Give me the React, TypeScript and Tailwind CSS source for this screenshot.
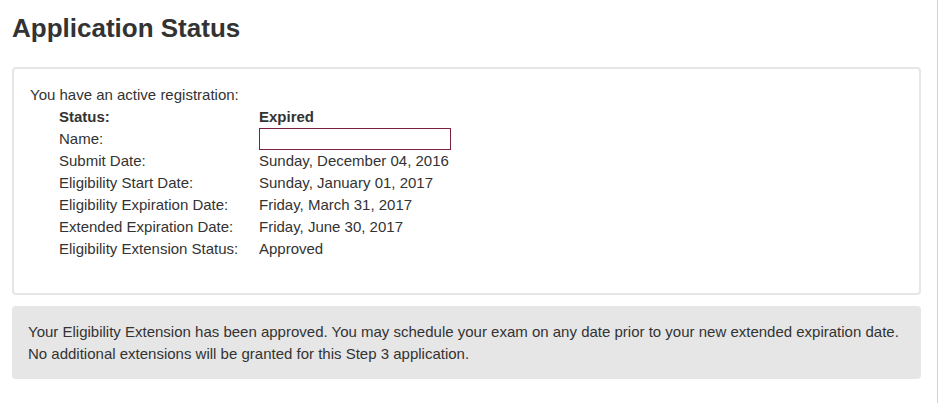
const rows: { label: string; value: string; bold?: boolean; input?: boolean }[] = [
  { label: "Status:", value: "Expired", bold: true },
  { label: "Name:", value: "", input: true },
  { label: "Submit Date:", value: "Sunday, December 04, 2016" },
  { label: "Eligibility Start Date:", value: "Sunday, January 01, 2017" },
  { label: "Eligibility Expiration Date:", value: "Friday, March 31, 2017" },
  { label: "Extended Expiration Date:", value: "Friday, June 30, 2017" },
  { label: "Eligibility Extension Status:", value: "Approved" },
];

export default function App() {
  return (
    <div className="h-[403px] w-[938px] bg-white font-['Liberation_Sans',Arial,sans-serif] text-[#333] border-r border-[#cfd3d6]">
      <div className="w-[909px] ml-3 pt-[13px]">
        <h1 className="text-[26px] leading-[30px] font-bold">Application Status</h1>

        <section className="mt-[24px] h-[228px] rounded border-2 border-[#e6e6e6] pl-[16px] pt-[15px] text-[15px] leading-[22px]">
          <p>You have an active registration:</p>
          <div className="pl-[29px]">
            {rows.map((row) => (
              <div key={row.label} className="flex h-[22px] items-center">
                <span className={"w-[200px] " + (row.bold ? "font-bold" : "")}>{row.label}</span>
                {row.input ? (
                  <span className="block h-[22px] w-[192px] border border-[#7b2040] bg-white" />
                ) : (
                  <span className={row.bold ? "font-bold" : ""}>{row.value}</span>
                )}
              </div>
            ))}
          </div>
        </section>

        <div className="mt-[11px] h-[73px] rounded bg-[#e6e6e6] pl-4 pt-[15px] text-[15px] leading-[22px]">
          <p>
            Your Eligibility Extension has been approved. You may schedule your exam on any date prior to your new extended expiration date.
          </p>
          <p>No additional extensions will be granted for this Step 3 application.</p>
        </div>
      </div>
    </div>
  );
}
